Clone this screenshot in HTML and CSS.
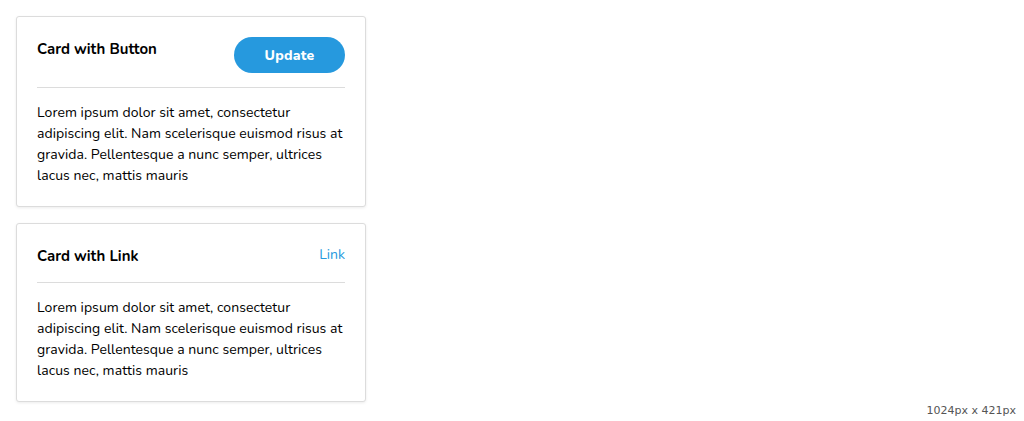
FILE: index.html
```html
<!DOCTYPE html>
<html>
<head>
<meta charset="utf-8">
<link rel="stylesheet" href="styles.css">
</head>
<body>
<main class="stack">
  <section class="card">
    <header class="card-header">
      <h2 class="card-title">Card with Button</h2>
      <button class="btn">Update</button>
    </header>
    <p class="card-body">Lorem ipsum dolor sit amet, consectetur adipiscing elit. Nam scelerisque euismod risus at gravida. Pellentesque a nunc semper, ultrices lacus nec, mattis mauris</p>
  </section>
  <section class="card">
    <header class="card-header">
      <h2 class="card-title">Card with Link</h2>
      <a class="link" href="#">Link</a>
    </header>
    <p class="card-body">Lorem ipsum dolor sit amet, consectetur adipiscing elit. Nam scelerisque euismod risus at gravida. Pellentesque a nunc semper, ultrices lacus nec, mattis mauris</p>
  </section>
</main>
<div class="size-label">1024px x 421px</div>
</body>
</html>
```
FILE: styles.css
```css
html, body {
  margin: 0;
  padding: 0;
  background: #fff;
}
body {
  font-family: "Nunito", "Noto Sans", sans-serif;
  color: #000;
  height: 421px;
  position: relative;
}
.stack {
  display: flex;
  flex-direction: column;
  gap: 16px;
  padding: 16px;
  width: 350px;
}
.card {
  border: 1px solid #dcdcdc;
  border-radius: 3px;
  box-shadow: 0 1px 3px rgba(0,0,0,0.08);
  padding: 0 20px;
  background: #fff;
}
.card-header {
  display: flex;
  justify-content: space-between;
  align-items: flex-start;
  padding: 20px 0 14px;
  border-bottom: 1px solid #dcdcdc;
}
.card-title {
  margin: 0;
  font-size: 15px;
  font-weight: 700;
  line-height: 24px;
}
.btn {
  width: 111px;
  height: 36px;
  border: none;
  border-radius: 18px;
  background: #2699de;
  color: #fff;
  font-family: inherit;
  font-weight: 800;
  font-size: 14px;
  letter-spacing: 0.2px;
  cursor: pointer;
}
.link {
  color: #2699de;
  text-decoration: none;
  font-size: 14px;
  line-height: 24px;
  margin-top: -1px;
}
.card-body {
  margin: 0;
  padding: 14px 0 20px;
  font-size: 14px;
  line-height: 21px;
  letter-spacing: 0.05px;
}
.size-label {
  position: absolute;
  right: 8px;
  bottom: 4px;
  font-family: "DejaVu Sans", sans-serif;
  font-size: 11px;
  color: #555;
}
```
